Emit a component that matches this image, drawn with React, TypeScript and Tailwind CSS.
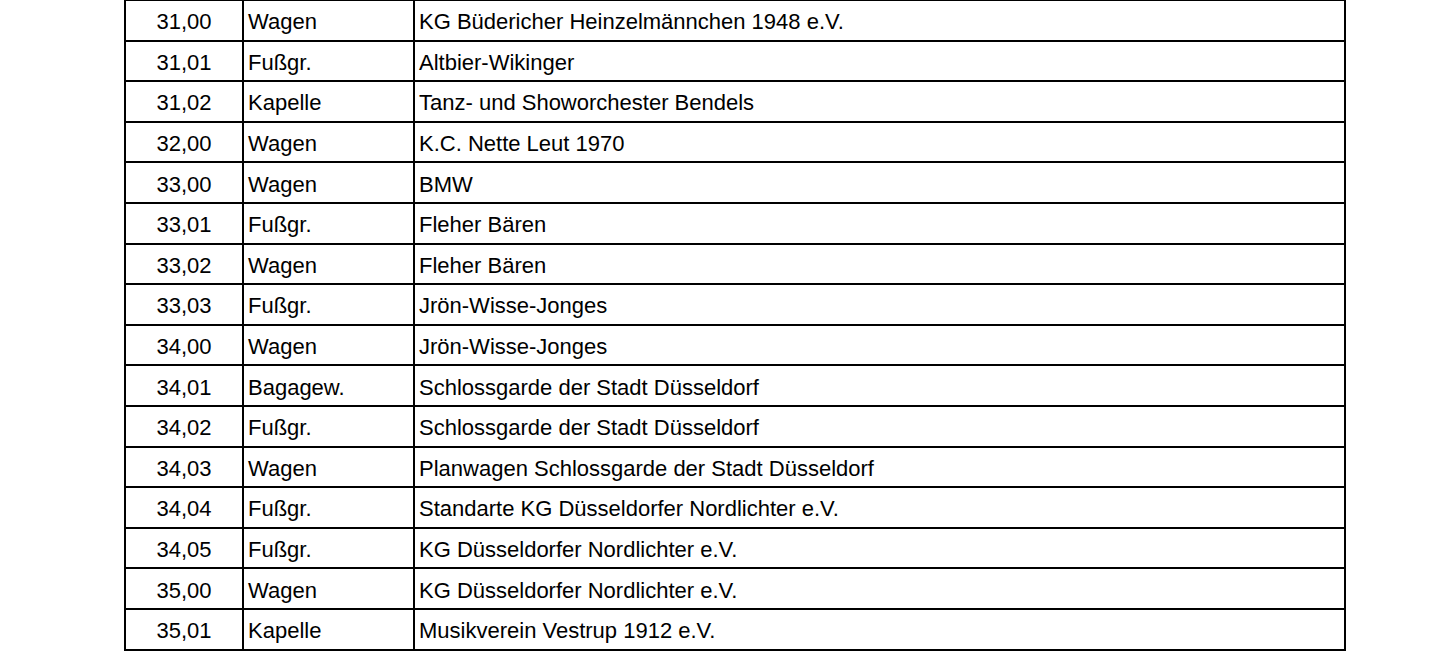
const rows: [string, string, string][] = [
  ["31,00", "Wagen", "KG Büdericher Heinzelmännchen 1948 e.V."],
  ["31,01", "Fußgr.", "Altbier-Wikinger"],
  ["31,02", "Kapelle", "Tanz- und Showorchester Bendels"],
  ["32,00", "Wagen", "K.C. Nette Leut 1970"],
  ["33,00", "Wagen", "BMW"],
  ["33,01", "Fußgr.", "Fleher Bären"],
  ["33,02", "Wagen", "Fleher Bären"],
  ["33,03", "Fußgr.", "Jrön-Wisse-Jonges"],
  ["34,00", "Wagen", "Jrön-Wisse-Jonges"],
  ["34,01", "Bagagew.", "Schlossgarde der Stadt Düsseldorf"],
  ["34,02", "Fußgr.", "Schlossgarde der Stadt Düsseldorf"],
  ["34,03", "Wagen", "Planwagen Schlossgarde der Stadt Düsseldorf"],
  ["34,04", "Fußgr.", "Standarte KG Düsseldorfer Nordlichter e.V."],
  ["34,05", "Fußgr.", "KG Düsseldorfer Nordlichter e.V."],
  ["35,00", "Wagen", "KG Düsseldorfer Nordlichter e.V."],
  ["35,01", "Kapelle", "Musikverein Vestrup 1912 e.V."],
];

export default function App() {
  return (
    <div className="w-[1447px] h-[651px] overflow-hidden bg-white font-['Liberation_Sans',Arial,sans-serif] text-black">
      <table className="ml-[124px] -mt-px w-[1222px] table-fixed border-collapse text-[22px] leading-none">
        <colgroup>
          <col className="w-[118px]" />
          <col className="w-[171px]" />
          <col />
        </colgroup>
        <tbody>
          {rows.map(([nr, typ, name]) => (
            <tr key={nr} className="h-[40.6px]">
              <td className="border-2 border-black pt-[4px] text-center align-middle">{nr}</td>
              <td className="border-2 border-black pl-[4px] pt-[4px] align-middle">{typ}</td>
              <td className="border-2 border-black pl-[4px] pt-[4px] align-middle">{name}</td>
            </tr>
          ))}
        </tbody>
      </table>
    </div>
  );
}
